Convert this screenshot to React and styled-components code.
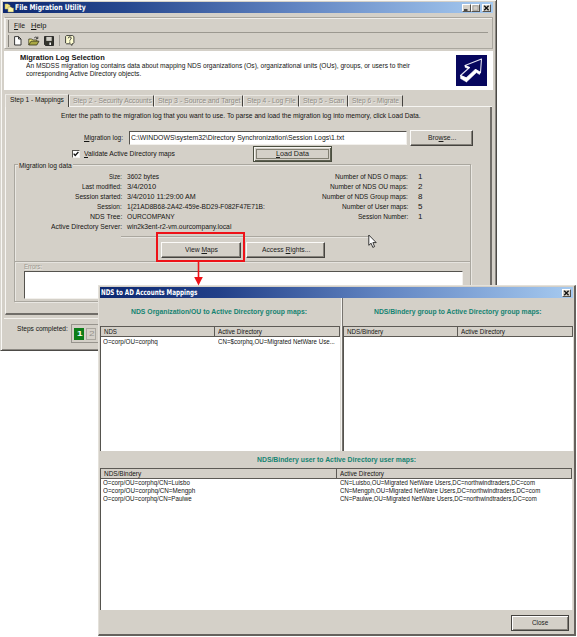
import React, { useLayoutEffect, useRef, useState } from "react";
import styled, { createGlobalStyle, css } from "styled-components";

const face = "#d4d0c8";
const shade = "#85827b";
const dark = "#45433f";
const sans = '"Liberation Sans", Arial, sans-serif';
const caption = '"DejaVu Sans Condensed", "DejaVu Sans", sans-serif';

const GlobalStyle = createGlobalStyle`
  *, *::before, *::after { box-sizing: border-box; }
  body { margin: 0; background: #fff; overflow: hidden; font: 8px/10px ${sans}; color: #141412; }
`;

const raised = css`
  border: 1px solid;
  border-color: #fbfaf8 ${dark} ${dark} #fbfaf8;
  box-shadow: inset -1px -1px 0 ${shade};
`;
const sunken = css`
  border: 1px solid;
  border-color: #55534e #f2f0ec #f2f0ec #55534e;
`;

/* Text */
const Run = styled.span`
  display: block;
  flex: none;
  width: ${(p) => p.$w}px;
  height: ${(p) => p.$lh || 10}px;
  line-height: ${(p) => p.$lh || 10}px;
  white-space: pre;
  font-family: ${(p) => (p.$caption ? caption : sans)};
  font-size: ${(p) => p.$size || 8}px;
  font-weight: ${(p) => (p.$bold ? 700 : 400)};
  color: ${(p) => p.$color || "inherit"};
  text-shadow: ${(p) => (p.$disabled ? "1px 1px 0 #efede9" : "none")};
  margin-left: ${(p) => p.$ml || 0}px;
  u { text-decoration-thickness: 1px; text-underline-offset: 1px; }
`;
const Glyphs = styled.span`
  display: block;
  width: max-content;
  transform-origin: 0 50%;
`;

/* Condenses the text so that it spans the width given to it. */
function Text({ w, children, ...rest }) {
  const inner = useRef(null);
  const [scale, setScale] = useState(1);
  useLayoutEffect(() => {
    setScale(w / inner.current.offsetWidth);
  }, [w]);
  return (
    <Run $w={w} {...rest}>
      <Glyphs ref={inner} style={{ transform: `scaleX(${scale})` }}>{children}</Glyphs>
    </Run>
  );
}

/* Shell */
const Desktop = styled.main`
  position: relative;
  width: 577px;
  height: 637px;
  background: #fff;
`;
const MainWindow = styled.section`
  width: 497px;
  height: 351px;
  padding: 2px 3px 0 2px;
  background: ${face};
  border-right: 1px solid #4c4a46;
  border-bottom: 1px solid #4c4a46;
  border-left: 1px solid #d8d5ce;
  box-shadow: inset 1px 1px 0 #f8f7f4, inset -1px -1px 0 #8c8983;
`;
const TitleBar = styled.header`
  display: flex;
  align-items: center;
  height: 11px;
  padding: 0 2px 0 1px;
  background: linear-gradient(90deg, #0d2870, ${(p) => (p.$dialog ? "#213f88 25%, " : "#27488f 25%, ")} #6285c2 60%, #a6caf0);
`;
const CaptionButtons = styled.div`
  display: flex;
  margin-left: auto;
`;
const CaptionButton = styled.span`
  display: flex;
  width: 9px;
  height: 8px;
  margin-left: ${(p) => (p.$gap ? 2 : 0)}px;
  background: ${face};
  border: 1px solid;
  border-color: #fff #55534e #55534e #fff;
`;
const Rebar = styled.div`
  width: 489px;
  height: 32px;
  margin: 4px 0 0 1px;
  border: 1px solid #aaa79f;
  border-left-color: #f7f6f3;
  box-shadow: inset 1px 1px 0 #f0eeea;
`;
const Band = styled.div`
  display: flex;
  align-items: center;
  height: 15px;
  margin: 0 4px 0 3px;
  padding-left: 6px;
  padding-top: ${(p) => (p.$rule ? 2 : 0)}px;
  border-bottom: ${(p) => (p.$rule ? "1px solid #9b9890" : "none")};
  background: linear-gradient(${shade}, ${shade}) 0 2px / 1px 12px no-repeat;
`;
const ToolIcon = styled.span`
  display: flex;
  margin-left: ${(p) => p.$ml}px;
`;
const Separator = styled.i`
  width: 1px;
  height: 11px;
  margin-left: 5px;
  background: #a29f98;
`;
const Banner = styled.div`
  display: flex;
  justify-content: space-between;
  width: 489px;
  height: 39px;
  margin: 2px 0 0 1px;
  padding: 1px 6px 0 16px;
  background: #fff;
`;
const BannerCopy = styled.div`
  padding-top: 2px;
`;
const BannerIcon = styled.div`
  margin-top: 3px;
  width: 31px;
  height: 31px;
`;

/* Tabs */
const Tabs = styled.nav`
  display: flex;
  width: 487px;
  height: 13px;
  margin: 4px 0 0 2px;
`;
const Tab = styled.div`
  width: ${(p) => p.$w}px;
  padding: ${(p) => (p.$active ? "0 0 0 4px" : "0 0 0 3px")};
  margin-top: ${(p) => (p.$active ? 0 : 1)}px;
  border-top: 1px solid #e9e7e2;
  border-left: 1px solid #f0eeea;
  border-right: 1px solid ${dark};
  border-bottom: ${(p) => (p.$active ? "none" : "1px solid #f6f5f2")};
`;
const TabsEnd = styled.div`
  flex: 1;
  border-bottom: 1px solid #f6f5f2;
`;
const TabPage = styled.div`
  width: 487px;
  height: 208px;
  margin-left: 2px;
  padding: 3px 0 0 8px;
  border-left: 1px solid #f6f5f2;
  border-right: 2px solid #706d68;
  border-bottom: 2px solid #706d68;
`;
const Row = styled.div`
  display: flex;
  align-items: center;
  height: ${(p) => p.$h}px;
  padding-left: ${(p) => p.$pl || 0}px;
`;
const Input = styled.div`
  ${sunken}
  width: 278px;
  height: 14px;
  margin-left: 6px;
  padding: 1px 0 0 1px;
  background: #fff;
`;
const Button = styled.button`
  ${raised}
  display: flex;
  flex: none;
  align-items: center;
  justify-content: center;
  width: ${(p) => p.$w}px;
  height: 16px;
  margin: 0 0 0 ${(p) => p.$ml || 0}px;
  padding: 0;
  background: ${face};
  color: #1c1c1a;
  ${(p) => p.$default && css`
    border: 1px solid ${dark};
    box-shadow: inset 1px 1px 0 #fff, inset -1px -1px 0 ${shade};
  `}
  ${(p) => p.$focus && css`
    border: 1px solid #4b4e40;
    box-shadow: inset 1px 1px 0 #f6f5f0, inset -1px -1px 0 #5c5f50;
    outline: 1px solid #817f72;
    outline-offset: -4px;
  `}
`;
const CheckBox = styled.span`
  ${sunken}
  display: flex;
  width: 8px;
  height: 8px;
  background: #fff;
`;
const Group = styled.div`
  width: 457px;
  height: 138px;
  border: 1px solid #aaa79f;
  box-shadow: inset 1px 1px 0 #e9e7e2, 1px 1px 0 #e9e7e2;
`;
const Legend = styled.div`
  width: 55px;
  height: 8px;
  margin: -4px 0 0 3px;
  padding-left: 1px;
  background: ${face};
`;
const DataRow = styled.div`
  display: grid;
  grid-template-columns: 107px 150px 136px 14px;
  column-gap: 0;
  height: 10px;
`;
const Cell = styled.div`
  display: flex;
  justify-content: ${(p) => (p.$end ? "flex-end" : "flex-start")};
  padding-left: ${(p) => p.$pl || 0}px;
`;
const Rule = styled.hr`
  width: ${(p) => p.$w}px;
  height: 2px;
  margin: 0 0 0 ${(p) => p.$ml || 0}px;
  border: 0;
  border-top: 1px solid #aaa79f;
  border-bottom: 1px solid #e6e4df;
`;
const ErrorBox = styled.div`
  ${sunken}
  width: 439px;
  height: 28px;
  margin-left: 9px;
  background: #fff;
`;
const StatusBar = styled.footer`
  display: flex;
  width: 488px;
  height: 31px;
  margin: 3px 0 0 1px;
  padding: 5px 0 0 13px;
  border-top: 1px solid #f3f1ed;
`;
const Steps = styled.div`
  display: flex;
  gap: 2px;
  width: 80px;
  height: 19px;
  margin-left: 3px;
  padding: 3px 2px;
  border: 1px solid #97948d;
`;
const Step = styled.span`
  display: flex;
  justify-content: center;
  width: 10px;
  height: 12px;
  background: ${(p) => (p.$done ? "#0b7d18" : face)};
  border: 1px solid ${(p) => (p.$done ? "#0b7d18" : "#aaa79f")};
`;

/* Mappings dialog */
const Dialog = styled.section`
  position: absolute;
  left: 98px;
  top: 285px;
  width: 478px;
  height: 351px;
  padding: 1px 1px 0 1px;
  background: ${face};
  border-right: 2px solid #65625d;
  border-bottom: 2px solid #65625d;
  border-top: 1px solid #e4e1da;
  border-left: 1px solid #e4e1da;
`;
const Panes = styled.div`
  display: grid;
  grid-template-columns: 241px 232px;
  column-gap: 1px;
  height: 153px;
`;
const Pane = styled.div`
  border-left: ${(p) => (p.$divided ? "1px solid #77746f" : "none")};
  box-shadow: ${(p) => (p.$divided ? "-1px 0 0 #f5f4f1" : "none")};
`;
const PaneTitle = styled.div`
  display: flex;
  align-items: center;
  height: ${(p) => p.$h}px;
  padding-left: ${(p) => p.$pl}px;
`;
const Table = styled.div`
  height: ${(p) => p.$h}px;
  border-left: 1px solid #55534e;
  border-right: 1px solid #dedbd5;
  background: #fff;
`;
const TableHead = styled.div`
  display: grid;
  grid-template-columns: ${(p) => p.$split}px 1fr;
  height: 11px;
  background: ${face};
  border: 1px solid #5d5a55;
  border-left: 0;
`;
const HeadCell = styled.div`
  padding-left: 3px;
  border-right: ${(p) => (p.$first ? "1px solid #5d5a55" : "none")};
`;
const TableRow = styled.div`
  display: grid;
  grid-template-columns: ${(p) => p.$split}px 1fr;
  height: 8px;
  padding-left: 2px;
`;
const TableBody = styled.div`
  padding-top: ${(p) => p.$pt}px;
`;
const DialogFooter = styled.div`
  display: flex;
  justify-content: flex-end;
  height: 24px;
  padding: 5px 4px 0 0;
`;

/* Annotations over the windows */
const Highlight = styled.div`
  position: absolute;
  left: 156px;
  top: 232px;
  width: 89px;
  height: 30px;
  border: 2px solid #ee1218;
`;
const Arrow = styled.svg`
  position: absolute;
  left: 194px;
  top: 261px;
`;
const Cursor = styled.svg`
  position: absolute;
  left: 368px;
  top: 234px;
`;

const CloseGlyph = () => (
  <svg width="7" height="6" viewBox="0 0 7 6"><path d="M1.2 .8 5.6 5.2M5.6 .8 1.2 5.2" stroke="#111" strokeWidth="1.3" /></svg>
);
const MinGlyph = () => (
  <svg width="7" height="6" viewBox="0 0 7 6"><path d="M1 5h3.5" stroke="#111" strokeWidth="1.4" /></svg>
);
const MaxGlyph = () => (
  <svg width="7" height="6" viewBox="0 0 7 6"><path d="M1 .8h5v4.5H1z" fill="none" stroke="#99968f" strokeWidth=".8" /></svg>
);
const AppGlyph = () => (
  <svg width="10" height="10" viewBox="0 0 10 10">
    <path d="M1 1h3l1 1h1v4H1z" fill="#f1e47c" stroke="#aaa06a" strokeWidth=".5" />
    <path d="M4 4h3l1 1h1.5v4H4z" fill="#fff7a1" stroke="#9d9565" strokeWidth=".5" />
  </svg>
);
const NewGlyph = () => (
  <svg width="8" height="10" viewBox="0 0 8 10"><path d="M.6 .6h4L7 3v6H.6zM4.5 .6V3H7" fill="#fff" stroke="#262626" strokeWidth=".9" /></svg>
);
const OpenGlyph = () => (
  <svg width="12" height="10" viewBox="0 0 12 10">
    <path d="M.8 9V3h3l1 1h4v1.2" fill="#f2ed7c" stroke="#35351c" strokeWidth=".8" />
    <path d="M.8 9 3 5.2h8L8.8 9z" fill="#a9a844" stroke="#35351c" strokeWidth=".8" />
    <path d="M6.2 2c1-1.4 2.6-1.2 3.3.3M9.8 .6v2H8" fill="none" stroke="#222" strokeWidth=".8" />
  </svg>
);
const SaveGlyph = () => (
  <svg width="10" height="10" viewBox="0 0 10 10">
    <path d="M.5 .5h9v9h-8l-1-1z" fill="#34352d" stroke="#161616" strokeWidth=".8" />
    <path d="M2.3 .9h5.4v4H2.3z" fill="#d2d0c9" /><path d="M5.4 6.6h1.6v2.3H5.4z" fill="#eee" />
  </svg>
);
const HelpGlyph = () => (
  <svg width="10" height="11" viewBox="0 0 10 11">
    <path d="M1.5 .6h6.2l1.2 1v6.2l-1 1H7v1.6L5.2 8.8H1.5L.6 8V1.5z" fill="#fffed2" stroke="#2c2c29" strokeWidth=".9" />
    <path d="M3.2 3.3c.1-1.9 3.1-1.8 3 0C6.2 4.4 4.8 4.3 4.8 5.6M4.8 6.6v1.1" fill="none" stroke="#222" strokeWidth="1" />
  </svg>
);
const BannerGlyph = () => (
  <svg width="31" height="31" viewBox="0 0 31 31">
    <path d="M0 0h31v31H0z" fill="#07075e" />
    <path d="M4.5 20.5 13.5 12.5 9 10.5 25.5 4 24.5 17.5 19.5 14.5 10.5 23z" fill="#07075e" stroke="#e4e4f2" strokeWidth="1.1" strokeLinejoin="round" />
    <path d="M4.5 20.5v3l6 3.5v-4zM10.5 23v4l9.5-9v-3.5zM19.5 14.5v2.5l4 2.5 1-2zM9 10.5v1.8l3 1.3 1.5-1z" fill="#fff" stroke="#fff" strokeWidth=".5" />
  </svg>
);

const summary = [
  ["Size:", 13, "3602 bytes", 32, "Number of NDS O maps:", 73, "1"],
  ["Last modified:", 40, "3/4/2010", 29, "Number of NDS OU maps:", 78, "2"],
  ["Session started:", 47, "3/4/2010 11:29:00 AM", 69, "Number of NDS Group maps:", 86, "8"],
  ["Session:", 25, "1{21AD8B68-2A42-459e-BD29-F082F47E71B:", 138, "Number of User maps:", 66, "5"],
  ["NDS Tree:", 32, "OURCOMPANY", 48, "Session Number:", 50, "1"],
  ["Active Directory Server:", 71, "win2k3ent-r2-vm.ourcompany.local", 104],
];

const steps = [
  ["Step 2 - Security Accounts", 79, 85],
  ["Step 3 - Source and Target", 82, 89],
  ["Step 4 - Log File", 49, 56],
  ["Step 5 - Scan", 41, 49],
  ["Step 6 - Migrate", 47, 55],
];

const users = [
  ["Luisbo", 87, 195],
  ["Mengph", 92, 200],
  ["Paulwe", 89, 197],
];

const teal = "#148371";

function MigrationWindow() {
  return (
    <MainWindow>
      <TitleBar>
        <AppGlyph />
        <Text w={71} $ml={1} $bold $caption $size={7.8} $color="#fff">File Migration Utility</Text>
        <CaptionButtons>
          <CaptionButton><MinGlyph /></CaptionButton>
          <CaptionButton><MaxGlyph /></CaptionButton>
          <CaptionButton $gap><CloseGlyph /></CaptionButton>
        </CaptionButtons>
      </TitleBar>
      <Rebar>
        <Band $rule>
          <Text w={11}><u>F</u>ile</Text>
          <Text w={15} $ml={6}><u>H</u>elp</Text>
        </Band>
        <Band>
          <ToolIcon $ml={0}><NewGlyph /></ToolIcon>
          <ToolIcon $ml={6}><OpenGlyph /></ToolIcon>
          <ToolIcon $ml={4}><SaveGlyph /></ToolIcon>
          <Separator />
          <ToolIcon $ml={5}><HelpGlyph /></ToolIcon>
        </Band>
      </Rebar>
      <Banner>
        <BannerCopy>
          <Text w={85} $lh={8} $bold>Migration Log Selection</Text>
          <Text w={384} $lh={8} $ml={6}>An MSDSS migration log contains data about mapping NDS organizations (Os), organizational units (OUs), groups, or users to their</Text>
          <Text w={115} $lh={8} $ml={6}>corresponding Active Directory objects.</Text>
        </BannerCopy>
        <BannerIcon><BannerGlyph /></BannerIcon>
      </Banner>
      <Tabs>
        <Tab $active $w={64}><Text w={54}>Step 1 - Mappings</Text></Tab>
        {steps.map(([label, w, box]) => (
          <Tab key={label} $w={box}><Text w={w} $color="#8f8c85" $disabled>{label}</Text></Tab>
        ))}
        <TabsEnd />
      </Tabs>
      <TabPage>
        <Row $h={11} $pl={47}>
          <Text w={360}>Enter the path to the migration log that you want to use. To parse and load the migration log into memory, click Load Data.</Text>
        </Row>
        <Row $h={33} $pl={70}>
          <Text w={39}><u>M</u>igration log:</Text>
          <Input><Text w={213}>C:\WINDOWS\system32\Directory Synchronization\Session Logs\1.txt</Text></Input>
          <Button $w={63} $ml={3}><Text w={28}>Bro<u>w</u>se...</Text></Button>
        </Row>
        <Row $h={0} $pl={58}>
          <CheckBox><svg width="6" height="6" viewBox="0 0 6 6"><path d="M.7 2.6 2.2 4.4 5.4 1" fill="none" stroke="#111" strokeWidth="1.3" /></svg></CheckBox>
          <Text w={91} $ml={4}><u>V</u>alidate Active Directory maps</Text>
          <Button $w={79} $ml={78} $focus><Text w={33}><u>L</u>oad Data</Text></Button>
        </Row>
        <Row $h={10} />
        <Group>
          <Legend><Text w={53}>Migration log data</Text></Legend>
          <Row $h={3} />
          {summary.map(([label, lw, value, vw, count, cw, n]) => (
            <DataRow key={label}>
              <Cell $end><Text w={lw}>{label}</Text></Cell>
              <Cell $pl={5}><Text w={vw}>{value}</Text></Cell>
              <Cell $end>{count && <Text w={cw}>{count}</Text>}</Cell>
              <Cell $pl={10}>{n && <Text w={4}>{n}</Text>}</Cell>
            </DataRow>
          ))}
          <Row $h={4} />
          <Rule $w={248} $ml={106} />
          <Row $h={23} $pl={146}>
            <Button $w={80}><Text w={33}>View <u>M</u>aps</Text></Button>
            <Button $w={79} $ml={5}><Text w={48}>Access <u>R</u>ights...</Text></Button>
          </Row>
          <Rule $w={455} />
          <Row $h={8} $pl={9}><Text w={18} $color="#9b9890" $disabled>Errors:</Text></Row>
          <ErrorBox />
        </Group>
      </TabPage>
      <StatusBar>
        <Text w={51}>Steps completed:</Text>
        <Steps>
          <Step $done><Text w={5} $bold $color="#fff">1</Text></Step>
          <Step><Text w={5} $color="#96938c">2</Text></Step>
        </Steps>
      </StatusBar>
    </MainWindow>
  );
}

function MappingsDialog() {
  return (
    <Dialog>
      <TitleBar $dialog>
        <Text w={96} $bold $caption $size={7.8} $color="#fff">NDS to AD Accounts Mappings</Text>
        <CaptionButtons><CaptionButton><CloseGlyph /></CaptionButton></CaptionButtons>
      </TitleBar>
      <Panes>
        <Pane>
          <PaneTitle $h={28} $pl={31}>
            <Text w={176} $bold $color={teal}>NDS Organization/OU to Active Directory group maps:</Text>
          </PaneTitle>
          <Table $h={125}>
            <TableHead $split={114}>
              <HeadCell $first><Text w={13}>NDS</Text></HeadCell>
              <HeadCell><Text w={44}>Active Directory</Text></HeadCell>
            </TableHead>
            <TableBody $pt={1}>
              <TableRow $split={115}>
                <Text w={55} $lh={8}>O=corp/OU=corphq</Text>
                <Text w={117} $lh={8}>CN=$corphq,OU=Migrated NetWare Use...</Text>
              </TableRow>
            </TableBody>
          </Table>
        </Pane>
        <Pane $divided>
          <PaneTitle $h={28} $pl={31}>
            <Text w={168} $bold $color={teal}>NDS/Bindery group to Active Directory group maps:</Text>
          </PaneTitle>
          <Table $h={125}>
            <TableHead $split={114}>
              <HeadCell $first><Text w={36}>NDS/Bindery</Text></HeadCell>
              <HeadCell><Text w={44}>Active Directory</Text></HeadCell>
            </TableHead>
          </Table>
        </Pane>
      </Panes>
      <PaneTitle $h={17} $pl={157}>
        <Text w={159} $bold $color={teal}>NDS/Bindery user to Active Directory user maps:</Text>
      </PaneTitle>
      <Table $h={142}>
        <TableHead $split={236}>
          <HeadCell $first><Text w={37}>NDS/Bindery</Text></HeadCell>
          <HeadCell><Text w={44}>Active Directory</Text></HeadCell>
        </TableHead>
        <TableBody $pt={0}>
          {users.map(([name, w, adw]) => (
            <TableRow key={name} $split={237}>
              <Text w={w} $lh={8}>{"O=corp/OU=corphq/CN=" + name}</Text>
              <Text w={adw} $lh={8}>{"CN=" + name + ",OU=Migrated NetWare Users,DC=northwindtraders,DC=com"}</Text>
            </TableRow>
          ))}
        </TableBody>
      </Table>
      <DialogFooter>
        <Button $w={58} $default><Text w={16}>Close</Text></Button>
      </DialogFooter>
    </Dialog>
  );
}

export default function App() {
  return (
    <Desktop>
      <GlobalStyle />
      <MigrationWindow />
      <MappingsDialog />
      <Highlight />
      <Arrow width="9" height="25" viewBox="0 0 9 25">
        <path d="M4.5 0v17" stroke="#ee1218" strokeWidth="1.6" />
        <path d="M.2 16h8.6L4.5 24.6z" fill="#ee1218" />
      </Arrow>
      <Cursor width="10" height="15" viewBox="0 0 10 15">
        <path d="M.8 1v10.3l2.3-2.1 1.7 4.2 1.8-.8-1.7-4h3.3z" fill="#fff" stroke="#222" strokeWidth=".9" />
      </Cursor>
    </Desktop>
  );
}
